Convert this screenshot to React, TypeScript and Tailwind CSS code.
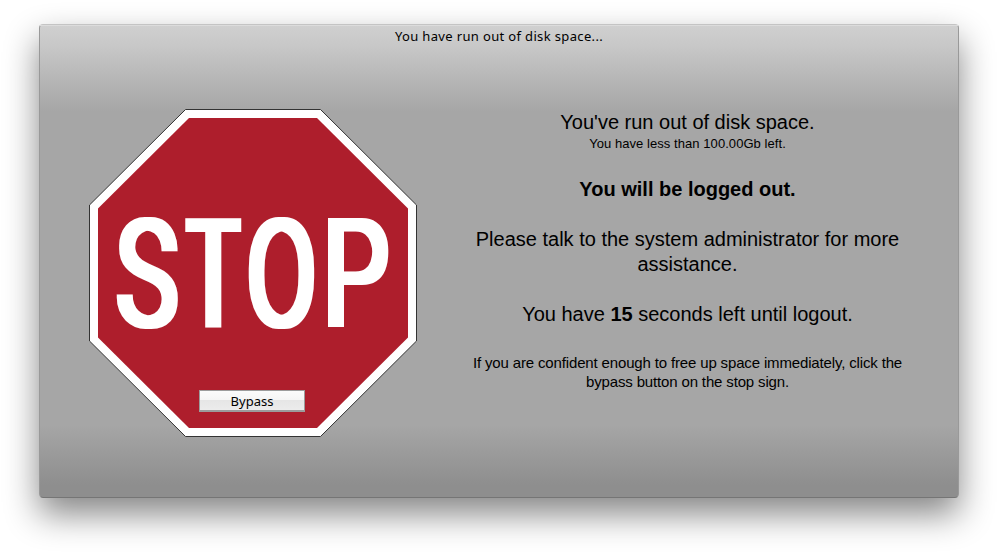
type GlyphProps = { char: string; x: number; y: number; sx: number; face: string; filter: string };

const regular = "font-[Roboto,sans-serif] text-[150px] font-normal";
const thin = "font-[Roboto,sans-serif] text-[140px] font-thin";

const glyphs: GlyphProps[] = [
  { char: "S", x: 115.6, y: 326.5, sx: 0.711, face: regular, filter: "url(#widen)" },
  { char: "T", x: 190.2, y: 322.3, sx: 0.55, face: thin, filter: "url(#widen-t)" },
  { char: "O", x: 245.7, y: 326.5, sx: 0.692, face: regular, filter: "url(#widen)" },
  { char: "P", x: 322.3, y: 326.3, sx: 0.707, face: regular, filter: "url(#widen)" },
];

function StopSign() {
  return (
    <svg className="block h-[328px] w-[328px]" viewBox="89 109 328 328">
      <defs>
        <filter id="widen" filterUnits="userSpaceOnUse" x="89" y="180" width="328" height="190" colorInterpolationFilters="sRGB">
          <feMorphology operator="dilate" radius="3 1" />
        </filter>
        <filter id="widen-t" filterUnits="userSpaceOnUse" x="89" y="180" width="328" height="190" colorInterpolationFilters="sRGB">
          <feMorphology operator="dilate" radius="7 5" />
        </filter>
      </defs>
      <polygon
        points="185.5,109.5 320.5,109.5 416.5,205 416.5,341 320.5,436.5 185.5,436.5 89.5,341 89.5,205"
        fill="#fff"
        stroke="#333"
        strokeWidth="1"
      />
      <polygon points="189,118 317,118 408,208.5 408,337.5 317,428 189,428 98,337.5 98,208.5" fill="#ae1e2c" />
      {glyphs.map((g) => (
        <g key={g.char} filter={g.filter}>
          <text transform={`translate(${g.x} ${g.y}) scale(${g.sx} 1)`} className={g.face} fill="#fff">
            {g.char}
          </text>
        </g>
      ))}
    </svg>
  );
}

export default function App() {
  return (
    <div className="h-[552px] w-[998px] overflow-hidden bg-white px-[39px] pt-6 text-black">
      <main className="h-[474px] w-[920px] rounded-[4px] border border-[#999] border-t-[#c4c4c4] border-b-[#757575] bg-[linear-gradient(180deg,#d0d0d0_0px,#c8c8c8_20px,#a6a6a6_86px,#a6a6a6_400px,#8e8e8e_460px,#8e8e8e_100%)] shadow-[0_16px_34px_rgba(0,0,0,0.48)]">
        <header className="h-[84px] border-t border-[#dcdcdc] text-center">
          <h1 className="font-['Noto_Sans',sans-serif] text-[13px] leading-5 tracking-[0.35px]">You have run out of disk space...</h1>
        </header>
        <div className="flex pl-[49px]">
          <div className="relative h-[328px] w-[328px] shrink-0">
            <StopSign />
            <button className="absolute top-[281px] left-[110px] h-[22px] w-[106px] border border-[#9c9c9c] border-b-2 bg-[linear-gradient(180deg,#fbfbfb_0,#f5f5f5_45%,#e6e6e6_50%,#ececec_100%)] pt-px font-['Noto_Sans',sans-serif] text-[13px] leading-[18px]">
              Bypass
            </button>
          </div>
          <section className="ml-[50px] w-[441px] pt-px text-center font-['Liberation_Sans',Arial,sans-serif] text-[20px] leading-[25px]">
            <p>You've run out of disk space.</p>
            <p className="text-[13px] leading-[17px] tracking-[0.06px]">You have less than 100.00Gb left.</p>
            <p className="mt-[25px] font-bold">You will be logged out.</p>
            <p className="mt-[25px]">Please talk to the system administrator for more<br />assistance.</p>
            <p className="mt-[25px]">You have <b>15</b> seconds left until logout.</p>
            <p className="mt-[26px] text-[15px] leading-[19px] tracking-[-0.15px]">If you are confident enough to free up space immediately, click the<br />bypass button on the stop sign.</p>
          </section>
        </div>
      </main>
    </div>
  );
}
